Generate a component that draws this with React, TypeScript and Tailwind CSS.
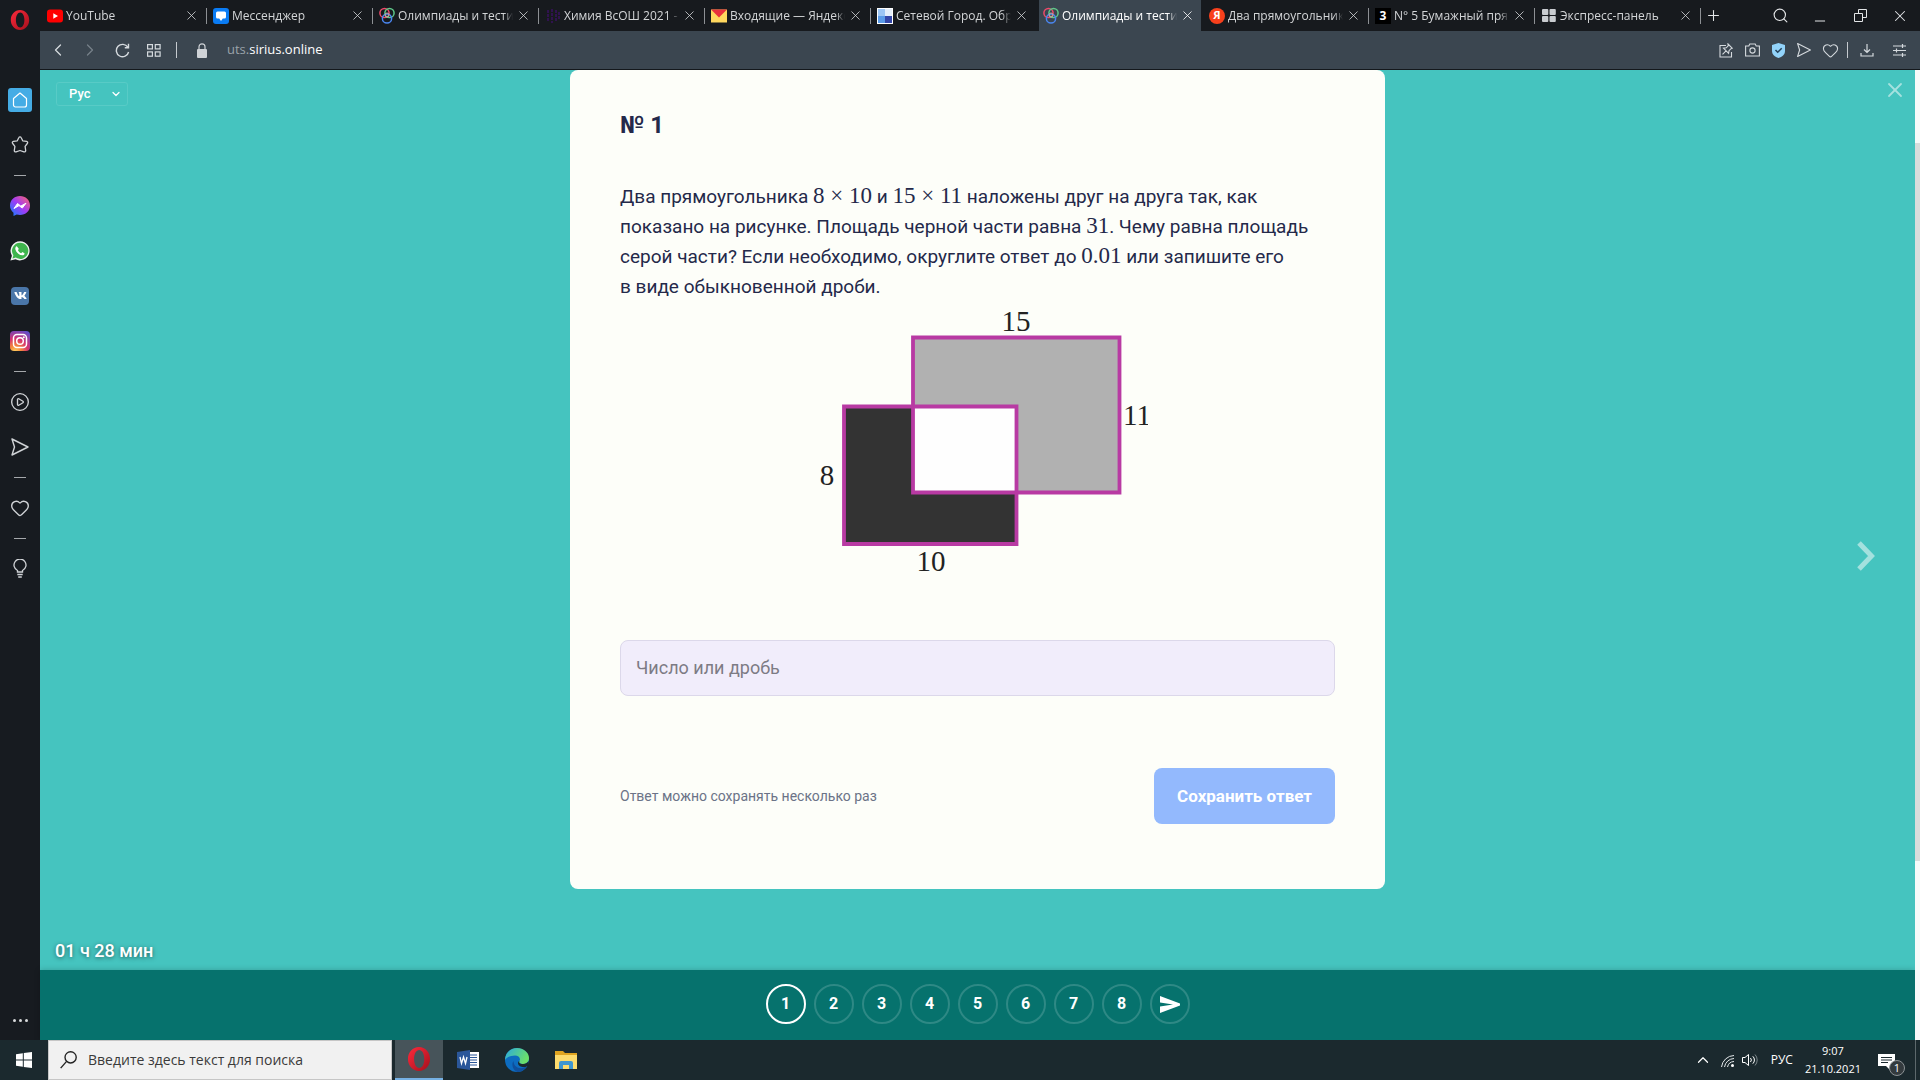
import type { ReactNode } from "react";
import {
  ChevronDown,
  ChevronLeft,
  ChevronRight,
  ChevronUp,
  CirclePlay,
  Heart,
  Minus,
  Plus,
  Search,
  X,
} from "lucide-react";
import { FaVk } from "react-icons/fa";

const OperaIcon = ({ size = 20 }: { size?: number }) => (
  <svg width={size} height={size} viewBox="0 0 20 20">
    <defs>
      <linearGradient id="opera" x1="0" y1="0" x2="1" y2="1">
        <stop offset="0" stopColor="#ff2a3c" />
        <stop offset="1" stopColor="#a3101c" />
      </linearGradient>
    </defs>
    <path
      fill="url(#opera)"
      fillRule="evenodd"
      d="M10 0C4.800 0 .8 4.500.8 10s4 10 9.200 10 9.200-4.500 9.200-10S15.200 0 10 0Zm.2 2.500c2.500 0 4.200 3.200 4.200 7.500s-1.700 7.500-4.200 7.500S5.900 14.300 5.900 10s1.800-7.500 4.300-7.500Z"
    />
  </svg>
);

const SiriusIcon = () => (
  <svg width="16" height="18" viewBox="0 0 16 18" fill="none" strokeWidth="1.5">
    <circle cx="5.500" cy="6" r="4.600" stroke="#ef4a6b" />
    <circle cx="10.500" cy="6" r="4.600" stroke="#5fc98a" />
    <circle cx="8" cy="11.500" r="4.600" stroke="#4a86f0" />
    <circle cx="8" cy="8" r="2" stroke="#c9a9a0" strokeWidth="1" />
  </svg>
);

const SendOutline = ({ size = 20 }: { size?: number }) => (
  <svg
    width={size}
    height={size}
    viewBox="0 0 20 20"
    fill="none"
    stroke="currentColor"
    strokeWidth="1.400"
    strokeLinejoin="round"
  >
    <path d="M2 2 18 10 2 18 4.500 10Z" />
  </svg>
);

const GridIcon = () => (
  <svg width="14" height="13" viewBox="0 0 14 13" fill="none" stroke="currentColor" strokeWidth="1.200">
    <rect x=".6" y=".6" width="4.800" height="4.300" />
    <rect x="8.300" y=".6" width="4.800" height="4.300" />
    <rect x=".6" y="7.900" width="4.800" height="4.300" />
    <rect x="8.300" y="7.900" width="4.800" height="4.300" />
  </svg>
);

const tabs: { title: string; icon: ReactNode; active?: boolean }[] = [
  {
    title: "YouTube",
    icon: (
      <svg width="16" height="16" viewBox="0 0 16 16">
        <rect y="1.500" width="16" height="13" rx="3" fill="#f00" />
        <path d="M6.300 5.300v5.400L11 8Z" fill="#fff" />
      </svg>
    ),
  },
  {
    title: "Мессенджер",
    icon: (
      <svg width="16" height="16" viewBox="0 0 16 16">
        <rect width="16" height="16" rx="3" fill="#0a7cf5" />
        <path d="M4.500 3.500h7a1.500 1.500 0 0 1 1.500 1.500v4a1.500 1.500 0 0 1-1.500 1.500H9.800L8 13l-1.800-2.500H4.500A1.500 1.500 0 0 1 3 9V5a1.500 1.500 0 0 1 1.500-1.500Z" fill="#fff" />
      </svg>
    ),
  },
  { title: "Олимпиады и тестир", icon: <SiriusIcon /> },
  {
    title: "Химия ВсОШ 2021 -",
    icon: (
      <svg width="16" height="16" viewBox="0 0 16 16" stroke="#30124f" strokeWidth="2">
        <path d="M3 2v11M7 1v14M11 2v12M14 4v8" strokeDasharray="3 1" />
      </svg>
    ),
  },
  {
    title: "Входящие — Яндекс",
    icon: (
      <svg width="16" height="16" viewBox="0 0 16 16">
        <path d="M0 1.500h16v13H0Z" fill="#ffd75e" />
        <path d="M0 1.500h16L8 9.500Z" fill="#e8303c" />
      </svg>
    ),
  },
  {
    title: "Сетевой Город. Обр",
    icon: (
      <svg width="16" height="16" viewBox="0 0 16 16">
        <path d="M0 0h16v16H0Z" fill="#fff" />
        <path d="M1 1h7v7H1Z" fill="#9cc6f5" />
        <path d="M8 8h7v7H8Z" fill="#3346a8" />
        <path d="M1 8h7v7H1Z" fill="#5a9be8" />
        <path d="M8 1h7v7H8Z" fill="#e4effb" />
      </svg>
    ),
  },
  { title: "Олимпиады и тестир", icon: <SiriusIcon />, active: true },
  {
    title: "Два прямоугольника",
    icon: (
      <span className="flex h-4 w-4 items-center justify-center rounded-full bg-[#f8401c] text-[11px] font-bold text-white">
        Я
      </span>
    ),
  },
  {
    title: "N° 5 Бумажный прям",
    icon: (
      <span className="flex h-4 w-4 items-center justify-center bg-black text-xs font-bold text-white">
        3
      </span>
    ),
  },
  {
    title: "Экспресс-панель",
    icon: (
      <svg width="14" height="14" viewBox="0 0 14 14" fill="#c9ccd0">
        <rect width="6.300" height="6" rx="1" />
        <rect x="7.500" width="6.300" height="6" rx="1" />
        <rect y="7" width="6.300" height="6" rx="1" />
        <rect x="7.500" y="7" width="6.300" height="6" rx="1" />
      </svg>
    ),
  },
];

const TabBar = () => (
  <div className="flex h-[31px] items-center bg-[#171a1e] pl-px">
    {tabs.map((tab, i) => (
      <div
        key={i}
        className={
          tab.active || i === 5
            ? "h-full min-w-0 max-w-[166px] flex-1 px-0.5"
            : "flex h-full min-w-0 max-w-[166px] flex-1 items-center bg-[linear-gradient(#8d9094,#8d9094)] bg-[length:1px_16px] bg-right bg-no-repeat px-0.5"
        }
      >
        <div
          className={
            tab.active
              ? "flex h-full w-full min-w-0 items-center gap-[3px] bg-[#3b4650] px-1 text-white"
              : "flex h-full w-full min-w-0 items-center gap-[3px] px-1 text-[#d3d5d7]"
          }
        >
          <span className="flex w-4 shrink-0 justify-center">{tab.icon}</span>
          <a
            href="#tab"
            className="min-w-0 flex-1 overflow-hidden whitespace-nowrap [mask-image:linear-gradient(to_right,#000_92%,transparent)]"
          >
            {tab.title}
          </a>
          <button aria-label="Закрыть вкладку" className="mr-0.5 shrink-0">
            <X size={15} strokeWidth={1.3} />
          </button>
        </div>
      </div>
    ))}
    <button aria-label="Новая вкладка" className="ml-1 text-[#e3e5e7]">
      <Plus size={17} strokeWidth={1.5} />
    </button>
    <div className="ml-auto flex text-[#e3e5e7]">
      <button aria-label="Поиск" className="flex w-10 items-center justify-center">
        <Search size={17} strokeWidth={1.6} />
      </button>
      <button aria-label="Свернуть" className="flex w-10 items-end justify-center">
        <Minus size={16} strokeWidth={1.5} className="translate-y-1" />
      </button>
      <button aria-label="Развернуть" className="flex w-10 items-center justify-center">
        <svg width="13" height="13" viewBox="0 0 13 13" fill="none" stroke="currentColor">
          <path d="M.5 4.500h8v8h-8ZM4.500 4V.5h8v8H9" />
        </svg>
      </button>
      <button aria-label="Закрыть" className="flex w-10 items-center justify-center">
        <X size={18} strokeWidth={1.4} />
      </button>
    </div>
  </div>
);

const Toolbar = () => (
  <div className="flex h-[39px] items-center border-b border-[#14181c] bg-[#3b4650] text-[#d5dade]">
    <div className="flex items-center pl-0.5">
      <button aria-label="Назад" className="flex w-8 justify-center">
        <ChevronLeft size={20} strokeWidth={1.5} />
      </button>
      <button aria-label="Вперёд" className="flex w-8 justify-center text-[#76818a]">
        <ChevronRight size={20} strokeWidth={1.5} />
      </button>
      <button aria-label="Обновить" className="flex w-8 justify-center">
        <svg width="15" height="15" viewBox="0 0 15 15" fill="none" stroke="currentColor" strokeWidth="1.400">
          <path d="M12.800 4.200A6.200 6.200 0 1 0 13.600 9M13.500.8v4H9.800" />
        </svg>
      </button>
      <button aria-label="Экспресс-панель" className="flex w-8 justify-center">
        <GridIcon />
      </button>
      <span className="ml-1.5 h-4 w-px bg-[#c5cacf]" />
      <svg width="10" height="15" viewBox="0 0 10 15" fill="#cfd3d7" className="ml-5">
        <rect y="6" width="10" height="9" rx="1" />
        <path d="M2 7V3.800a3 3 0 0 1 6 0V7" fill="none" stroke="#cfd3d7" strokeWidth="1.200" />
      </svg>
      <a href="#address" className="ml-5 text-[13px] text-[#9aa3aa]">
        uts.<span className="text-white">sirius.online</span>
      </a>
    </div>
    <div className="ml-auto flex items-center pr-2">
      <button aria-label="Закрепить" className="flex w-[26px] justify-center">
        <svg width="14" height="15" viewBox="0 0 14 15" fill="none" stroke="currentColor" strokeWidth="1.100">
          <path d="M7 2.500H1v11.500h11.500V9" />
          <path d="m9 1 4.200 4.200-1.200.5-2 2-.4 2.600L4.500 5.200l2.700-.4 2-2ZM7 7.800 3.500 11.400" />
        </svg>
      </button>
      <button aria-label="Снимок" className="flex w-[26px] justify-center">
        <svg width="15" height="14" viewBox="0 0 15 14" fill="none" stroke="currentColor" strokeWidth="1.100">
          <path d="M.6 3h3.200l1-2h5.400l1 2h3.200v10H.6Z" />
          <circle cx="7.500" cy="7.500" r="2.600" />
        </svg>
      </button>
      <button aria-label="Защита" className="flex w-[26px] justify-center">
        <svg width="13" height="15" viewBox="0 0 13 15">
          <path d="M6.500 0 13 2v6c0 3.500-3 6-6.500 7C3 14 0 11.500 0 8V2Z" fill="#92d3fa" />
          <path d="m3.500 7 2.200 2.300 4-4" fill="none" stroke="#24435c" strokeWidth="1.500" />
        </svg>
      </button>
      <button aria-label="Отправить" className="flex w-[26px] justify-center">
        <SendOutline size={16} />
      </button>
      <button aria-label="В избранное" className="flex w-[26px] justify-center">
        <Heart size={17} strokeWidth={1.5} />
      </button>
      <span className="ml-1 h-4 w-px bg-[#c5cacf]" />
      <button aria-label="Загрузки" className="flex w-[38px] justify-center">
        <svg width="14" height="14" viewBox="0 0 14 14" fill="none" stroke="currentColor" strokeWidth="1.200">
          <path d="M7 1v8.500M4 6.500l3 3 3-3M1 10v3h12v-3" />
        </svg>
      </button>
      <button aria-label="Настройки" className="flex w-[26px] justify-center">
        <svg width="13" height="13" viewBox="0 0 13 13" fill="none" stroke="currentColor" strokeWidth="1.200">
          <path d="M0 2h13M0 6.500h13M0 11h13M9.500 0v4M3.500 4.500v4M9.500 9v4" />
        </svg>
      </button>
    </div>
  </div>
);

const SideButton = ({ label, children }: { label: string; children: ReactNode }) => (
  <button aria-label={label} className="flex h-[45px] w-full items-center justify-center">
    {children}
  </button>
);

const SideDivider = () => (
  <div className="flex h-4 items-center justify-center">
    <span className="h-px w-3 bg-[#a5a8ab]" />
  </div>
);

const Sidebar = () => (
  <aside className="flex w-10 shrink-0 flex-col items-center bg-[#171b20] text-[#d0d3d6]">
    <div className="h-[77px] pt-2.5">
      <OperaIcon />
    </div>
    <SideButton label="Главная">
      <span className="flex h-6 w-6 items-center justify-center rounded-[3px] bg-[#45ace5] text-white">
        <svg width="16" height="16" viewBox="0 0 16 16" fill="none" stroke="currentColor" strokeWidth="1.200" strokeLinejoin="round">
          <path d="M1.500 6.500 8 1l6.500 5.500V13a2 2 0 0 1-2 2h-9a2 2 0 0 1-2-2Z" />
        </svg>
      </span>
    </SideButton>
    <SideButton label="Закладки">
      <svg width="18" height="17" viewBox="0 0 18 17" fill="none" stroke="currentColor" strokeWidth="1.300" strokeLinejoin="round">
        <path d="M7.900 1.500a1.200 1.200 0 0 1 2.200 0l1.600 3.300 3.900.5a1.300 1.300 0 0 1 .7 2.200l-2.200 2.800.6 4.200a1.300 1.300 0 0 1-1.800 1.300L9 14.500l-3.900 1.300a1.300 1.300 0 0 1-1.800-1.300l.6-4.200-2.200-2.800a1.300 1.300 0 0 1 .7-2.200l3.900-.5Z" />
      </svg>
    </SideButton>
    <SideDivider />
    <SideButton label="Messenger">
      <svg width="20" height="20" viewBox="0 0 20 20">
        <defs>
          <linearGradient id="msg" x1="0" y1="1" x2="1" y2="0">
            <stop offset="0" stopColor="#0a84ff" />
            <stop offset=".5" stopColor="#a13af5" />
            <stop offset="1" stopColor="#ff6a68" />
          </linearGradient>
        </defs>
        <path d="M10 0C4.400 0 0 4 0 9.500c0 3 1.300 5.500 3.500 7.200V20l3.200-1.500c1 .3 2.200.5 3.300.5 5.600 0 10-4 10-9.500S15.600 0 10 0Z" fill="url(#msg)" />
        <path d="m4 12.500 3.500-5 3.300 2.600L16 7.200l-3.700 4.900L9 9.600Z" fill="#fff" stroke="#fff" strokeLinejoin="round" />
      </svg>
    </SideButton>
    <SideButton label="WhatsApp">
      <svg width="20" height="20" viewBox="0 0 20 20">
        <path d="M10.200.2a9.600 9.600 0 0 0-8.300 14.500L.4 19.600l5.100-1.300A9.600 9.600 0 1 0 10.200.2Z" fill="#f0f3f0" />
        <path d="M10.200 1.700a8.100 8.100 0 0 0-6.800 12.600l-.9 3.200 3.300-.9a8.100 8.100 0 1 0 4.400-14.900Z" fill="#3fb54d" />
        <path d="M7 5.400c-.4-.2-1 0-1.300.5-1 1.600-.2 3.900 1.800 6 2 2 4.600 3 6.300 2 .7-.5.9-1.200.6-1.700l-2-1.100-1.200 1.200c-1.600-.6-2.700-1.700-3.300-3.200l1-1Z" fill="#fff" />
      </svg>
    </SideButton>
    <SideButton label="ВКонтакте">
      <span className="flex h-[18px] w-[18px] items-center justify-center rounded bg-[#4a76a8] text-white">
        <FaVk size={13} />
      </span>
    </SideButton>
    <SideButton label="Instagram">
      <svg width="20" height="20" viewBox="0 0 20 20">
        <defs>
          <radialGradient id="inst" cx=".25" cy="1.050" r="1.200">
            <stop offset="0" stopColor="#fdd865" />
            <stop offset=".25" stopColor="#f58a3c" />
            <stop offset=".55" stopColor="#d6326f" />
            <stop offset="1" stopColor="#5a4fd0" />
          </radialGradient>
        </defs>
        <rect width="20" height="20" rx="4" fill="url(#inst)" />
        <g fill="none" stroke="#fff" strokeWidth="1.500">
          <rect x="3.500" y="3.500" width="13" height="13" rx="3.500" />
          <circle cx="10" cy="10" r="3.300" />
        </g>
        <circle cx="13.800" cy="6.200" r="1" fill="#fff" />
      </svg>
    </SideButton>
    <SideDivider />
    <SideButton label="Плеер">
      <CirclePlay size={20} strokeWidth={1.6} />
    </SideButton>
    <SideButton label="Поток">
      <SendOutline />
    </SideButton>
    <SideDivider />
    <SideButton label="Избранное">
      <Heart size={20} strokeWidth={1.6} />
    </SideButton>
    <SideDivider />
    <SideButton label="Подсказки">
      <svg width="14" height="19" viewBox="0 0 14 19" fill="none" stroke="currentColor" strokeWidth="1.300">
        <path d="M4.500 12.300v-.8a6 6 0 1 1 5 0v.8M3.800 13h6.400M4.300 15.500h5.400M5.200 18h3.600" />
      </svg>
    </SideButton>
    <button aria-label="Ещё" className="mt-auto flex h-10 items-center gap-[3px]">
      <span className="h-[3px] w-[3px] rounded-full bg-[#d8dadc]" />
      <span className="h-[3px] w-[3px] rounded-full bg-[#d8dadc]" />
      <span className="h-[3px] w-[3px] rounded-full bg-[#d8dadc]" />
    </button>
  </aside>
);

const Num = ({ children }: { children: ReactNode }) => (
  <span className="font-['Liberation_Serif',serif] text-[23px] leading-none">{children}</span>
);

const Figure = () => (
  <svg width="340" height="272" viewBox="808 304 340 272" className="mx-auto mt-0.5 block">
    <path d="M913 337.500h206.500v155H913Z" fill="#b1b1b1" />
    <path d="M844 406.500h172.500V544H844Z" fill="#333" />
    <path d="M913 406.500h103.500v86H913Z" fill="#fefefe" />
    <g fill="none" stroke="#b83aa3" strokeWidth="3.800">
      <path d="M913 337.500h206.500v155H913Z" />
      <path d="M844 406.500h172.500V544H844Z" />
    </g>
    <g fill="#222" fontFamily="'Liberation Serif', serif" fontSize="29" textAnchor="middle">
      <text x="1016" y="331">15</text>
      <text x="1137" y="425">11</text>
      <text x="827" y="485">8</text>
      <text x="931" y="571">10</text>
    </g>
  </svg>
);

const TaskCard = () => (
  <form className="w-full rounded-lg bg-[#fdfef9] px-[50px] pt-10 pb-[65px] text-[#24294a]">
    <h1 className="text-2xl leading-[30px] font-bold">№ 1</h1>
    <p className="mt-[42px] text-[19px] leading-[30px]">
      Два прямоугольника <Num>8 × 10</Num> и <Num>15 × 11</Num> наложены друг на друга так, как
      <br />
      показано на рисунке. Площадь черной части равна <Num>31</Num>. Чему равна площадь
      <br />
      серой части? Если необходимо, округлите ответ до <Num>0.01</Num> или запишите его
      <br />в виде обыкновенной дроби.
    </p>
    <Figure />
    <input
      aria-label="Ответ"
      placeholder="Число или дробь"
      className="mt-16 h-14 w-full rounded-lg border border-[#dcd8ea] bg-[#f1edfb] px-[15px] pb-0.5 text-lg placeholder:text-[#7d7b84]"
    />
    <div className="mt-[72px] flex items-center justify-between">
      <span className="text-sm text-[#6b7387]">Ответ можно сохранять несколько раз</span>
      <button type="button" className="h-14 rounded-lg bg-[#93b9fd] px-[23px] text-[17px] font-bold text-white">
        Сохранить ответ
      </button>
    </div>
  </form>
);

const QuizPage = () => (
  <main className="flex min-h-0 flex-1 font-[Roboto,sans-serif]">
    <div className="flex min-w-0 flex-1 flex-col">
      <div className="flex flex-1 justify-center bg-[#45c4bf]">
        <div className="flex flex-1 flex-col justify-between">
          <div className="relative mt-3 ml-4 h-6 w-[72px] text-white">
            <select
              aria-label="Язык"
              className="h-full w-full appearance-none rounded-[3px] border border-[#58cbc6] bg-transparent pl-3 text-[13px] font-medium"
            >
              <option>Рус</option>
            </select>
            <ChevronDown size={12} strokeWidth={2.5} className="pointer-events-none absolute top-1.5 right-1.5" />
          </div>
          <div className="mb-[5px] ml-[15px] text-lg font-medium text-white [text-shadow:0_1px_4px_rgba(0,0,0,0.5)]">
            01 ч 28 мин
          </div>
        </div>
        <div className="w-[815px]">
          <TaskCard />
        </div>
        <div className="flex flex-1 flex-col items-end">
          <button aria-label="Закрыть" className="mt-2 mr-2 text-[#a5e2df]">
            <X size={24} strokeWidth={1.8} />
          </button>
          <button aria-label="Следующая задача" className="my-auto mr-10 pt-10">
            <svg width="18" height="30" viewBox="0 0 18 30" fill="none" stroke="#a3e1de" strokeWidth="5">
              <path d="M2 2 14.500 15 2 28" />
            </svg>
          </button>
        </div>
      </div>
      <nav className="flex h-[70px] items-center justify-center gap-2 bg-[#06726d] pb-0.5 text-base font-bold text-white shadow-[0_0_6px_rgba(0,0,0,0.2)]">
        {[1, 2, 3, 4, 5, 6, 7, 8].map((n) => (
          <button
            key={n}
            className={
              n === 1
                ? "h-10 w-10 rounded-full border-2 border-white"
                : "h-10 w-10 rounded-full border-2 border-[#2e8985]"
            }
          >
            {n}
          </button>
        ))}
        <button
          aria-label="Завершить"
          className="flex h-10 w-10 items-center justify-center rounded-full border-2 border-[#2e8985]"
        >
          <svg width="20" height="17" viewBox="0 0 20 17" fill="#fff">
            <path d="M0 0 20 7.500v2L0 17V10.500L13 8.500 0 6.500Z" />
          </svg>
        </button>
      </nav>
    </div>
    {/* Scrollbar */}
    <div className="flex w-[5px] flex-col bg-[#f6fbfa] pt-[73px]">
      <div className="h-4/5 bg-[#d8dddc]" />
    </div>
  </main>
);

const Taskbar = () => (
  <footer className="flex h-10 items-center bg-[#1b292e] text-white">
    <button aria-label="Пуск" className="flex h-full w-12 items-center justify-center">
      <svg width="16" height="16" viewBox="0 0 16 16" fill="#fff">
        <path d="M0 2.200 6.800 1.200V7.500H0ZM7.800 1 16 0v7.500H7.800ZM0 8.500h6.800v6.300L0 13.800ZM7.800 8.500H16V16l-8.200-1.100Z" />
      </svg>
    </button>
    <label className="flex h-full w-[344px] items-center gap-[11px] border border-[#c6c6c6] bg-[#f1f1f1] px-[11px] text-[#333]">
      <svg width="17" height="18" viewBox="0 0 16 17" fill="none" stroke="#222" strokeWidth="1.300">
        <circle cx="10" cy="6" r="5.300" />
        <path d="M6.200 9.800.6 16.200" />
      </svg>
      <input
        aria-label="Поиск"
        placeholder="Введите здесь текст для поиска"
        className="min-w-0 flex-1 bg-transparent text-sm placeholder:text-[#3a3a3a]"
      />
    </label>
    <div className="ml-[3px] flex h-full gap-px">
      <button aria-label="Opera" className="flex w-12 items-center justify-center border-b-2 border-[#76b1e4] bg-[#47545a]">
        <OperaIcon size={24} />
      </button>
      <button aria-label="Word" className="flex w-12 items-center justify-center">
        <svg width="22" height="20" viewBox="0 0 22 20">
          <path d="M12 2h10v16H12Z" fill="#fff" />
          <path d="M13 5h7M13 7.500h7M13 10h7M13 12.500h7M13 15h7" stroke="#2b579a" />
          <path d="M0 2 13 0v20L0 18Z" fill="#2b579a" />
          <path d="m3 7 1.500 6.500L6.500 7l2 6.500L10 7" fill="none" stroke="#fff" strokeWidth="1.300" />
        </svg>
      </button>
      <button aria-label="Edge" className="flex w-12 items-center justify-center">
        <svg width="24" height="24" viewBox="0 0 24 24">
          <defs>
            <linearGradient id="edge" x1="0" y1="0" x2="1" y2=".4">
              <stop offset="0" stopColor="#2aa8e0" />
              <stop offset="1" stopColor="#6be06a" />
            </linearGradient>
          </defs>
          <circle cx="12" cy="12" r="12" fill="#0d6cc0" />
          <path d="M0 12C0 5 5.500 0 12 0s12 4.500 12 10c0 4-3 6-6 6-3.500 0-4.500-1.500-3.500-3 1.500-3-1-5.500-4.500-5.500C5 7.500 1 10 0 12Z" fill="url(#edge)" />
          <path d="M8.500 13c0 5 4.500 8 9 7 2-.4 3.500-1.300 4.500-2.500C20 22 16 24 12.500 24 8 23 6 16 8.500 13Z" fill="#0f4f9c" />
          <path d="M14.500 13c-1 1.500 0 3 3.500 3 2.300 0 4.500-1 5.500-3L24 18l-2 .2c-3 1.800-9 .8-9-3.200 0-1 .7-2 1.500-2Z" fill="#1b292e" />
        </svg>
      </button>
      <button aria-label="Проводник" className="flex w-12 items-center justify-center">
        <svg width="22" height="18" viewBox="0 0 22 18">
          <path d="M0 0h8l2 2h12v16H0Z" fill="#e0a420" />
          <path d="M0 4h22v14H0Z" fill="#fddb6d" />
          <path d="M4 18v-6a2 2 0 0 1 2-2h10a2 2 0 0 1 2 2v6h-4v-4H8v4Z" fill="#3f96cf" />
        </svg>
      </button>
    </div>
    <div className="ml-auto flex h-full items-center text-xs">
      <button aria-label="Скрытые значки" className="mr-2">
        <ChevronUp size={18} strokeWidth={1.6} />
      </button>
      <svg width="16" height="16" viewBox="0 0 16 16" fill="none" stroke="#e4e8ea" className="mr-1.5">
        <path d="M1.500 15A13 13 0 0 1 14 3.500M4.500 15A10 10 0 0 1 14 6.500M7.500 15A7 7 0 0 1 14 9.500" />
        <circle cx="12.500" cy="13.500" r="1.500" fill="#fff" stroke="none" />
      </svg>
      <svg width="17" height="16" viewBox="0 0 17 16" fill="none" stroke="#fff" className="mr-3">
        <path d="M.5 5.500h2.500l3.500-3v11l-3.500-3H.5ZM8.500 6a3 3 0 0 1 0 4M10.800 4.300a5 5 0 0 1 0 7.400" />
        <path d="M13 2.500a8 8 0 0 1 0 11" stroke="#7a8589" />
      </svg>
      <span className="mr-3">РУС</span>
      <div className="text-center text-[11px] leading-[18px]">
        <div>9:07</div>
        <div>21.10.2021</div>
      </div>
      <button aria-label="Уведомления" className="relative mr-3.5 ml-4 h-6 w-6">
        <svg width="17" height="16" viewBox="0 0 17 16" className="mt-1 ml-px">
          <path d="M0 0h17v12h-5v4l-4-4H0Z" fill="#fff" />
          <path d="M3 3.500h11M3 6h11M3 8.500h7" stroke="#1b292e" />
        </svg>
        <span className="absolute -right-1 -bottom-1 flex h-4 w-4 items-center justify-center rounded-full border border-[#8c9295] bg-[#333a3e] text-[11px]">
          1
        </span>
      </button>
      <span className="mr-1 h-full w-px bg-[#5d686c]" />
    </div>
  </footer>
);

export default function App() {
  return (
    <div className="flex min-h-screen flex-col bg-[#171a1e] font-['Open_Sans','Noto_Sans',sans-serif] text-xs text-[#d3d5d7]">
      <div className="flex flex-1">
        <Sidebar />
        <div className="flex min-w-0 flex-1 flex-col">
          <TabBar />
          <Toolbar />
          <QuizPage />
        </div>
      </div>
      <Taskbar />
    </div>
  );
}
